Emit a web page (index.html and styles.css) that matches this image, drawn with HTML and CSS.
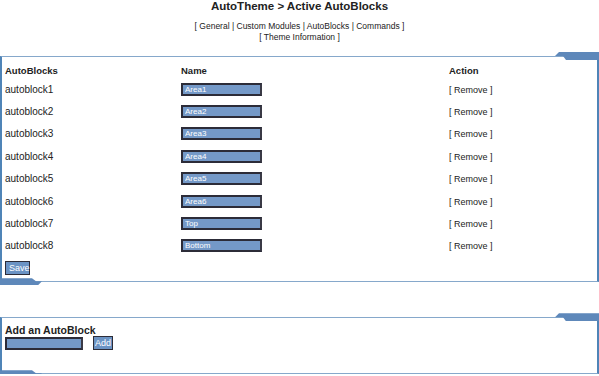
FILE: index.html
```html
<!DOCTYPE html>
<html lang="en">
<head>
  <meta charset="UTF-8">
  <title>AutoTheme - Active AutoBlocks</title>
  <link rel="stylesheet" href="styles.css">
</head>
<body>
  <h1 class="title">AutoTheme &gt; Active AutoBlocks</h1>
  <div class="menu">
    [ <a href="#">General</a> | <a href="#">Custom Modules</a> | <a href="#">AutoBlocks</a> | <a href="#">Commands</a> ]<br>
    [ <a href="#">Theme Information</a> ]
  </div>

  <form class="panel panel-list">
    <div class="grid head">
      <span>AutoBlocks</span>
      <span>Name</span>
      <span>Action</span>
    </div>
    <div class="grid row">
      <span>autoblock1</span>
      <span><input class="field" type="text" value="Area1"></span>
      <span><a class="remove" href="#">[ Remove ]</a></span>
    </div>
    <div class="grid row">
      <span>autoblock2</span>
      <span><input class="field" type="text" value="Area2"></span>
      <span><a class="remove" href="#">[ Remove ]</a></span>
    </div>
    <div class="grid row">
      <span>autoblock3</span>
      <span><input class="field" type="text" value="Area3"></span>
      <span><a class="remove" href="#">[ Remove ]</a></span>
    </div>
    <div class="grid row">
      <span>autoblock4</span>
      <span><input class="field" type="text" value="Area4"></span>
      <span><a class="remove" href="#">[ Remove ]</a></span>
    </div>
    <div class="grid row">
      <span>autoblock5</span>
      <span><input class="field" type="text" value="Area5"></span>
      <span><a class="remove" href="#">[ Remove ]</a></span>
    </div>
    <div class="grid row">
      <span>autoblock6</span>
      <span><input class="field" type="text" value="Area6"></span>
      <span><a class="remove" href="#">[ Remove ]</a></span>
    </div>
    <div class="grid row">
      <span>autoblock7</span>
      <span><input class="field" type="text" value="Top"></span>
      <span><a class="remove" href="#">[ Remove ]</a></span>
    </div>
    <div class="grid row">
      <span>autoblock8</span>
      <span><input class="field" type="text" value="Bottom"></span>
      <span><a class="remove" href="#">[ Remove ]</a></span>
    </div>
    <button class="btn save" type="submit">Save</button>
  </form>

  <form class="panel panel-add">
    <div class="add-label">Add an AutoBlock</div>
    <div class="add-row">
      <input class="field field-new" type="text">
      <button class="btn" type="submit">Add</button>
    </div>
  </form>
</body>
</html>
```

FILE: styles.css
```css
body {
  margin: 0;
  font-family: "Liberation Sans", Arial, sans-serif;
  font-size: 10px;
  color: #222;
  background: #fff;
}
a {
  color: #222;
  text-decoration: none;
}
.title {
  margin: 0;
  text-align: center;
  font-size: 11.5px;
  font-weight: bold;
  color: #222;
  line-height: 12px;
}
.menu {
  margin-top: 9px;
  text-align: center;
  font-size: 8.5px;
  line-height: 11px;
}
.panel {
  position: relative;
  border-left: 2px solid #4f84b7;
  border-right: 2px solid #4f84b7;
  border-top: 1px solid #86a8cb;
  border-bottom: 1px solid #86a8cb;
}
/* tab in the top right corner */
.panel::before {
  content: "";
  position: absolute;
  top: -5px;
  right: -2px;
  width: 44px;
  height: 8px;
  background: #5e88ba;
  clip-path: polygon(4px 0, 100% 0, 100% 100%, 11px 100%, 8px 4px, 0 4px);
}
/* tab in the bottom left corner */
.panel::after {
  content: "";
  position: absolute;
  bottom: -4px;
  left: -2px;
  width: 42px;
  height: 7px;
  background: #5e88ba;
  clip-path: polygon(0 0, 32px 0, 36px 3px, 42px 3px, 38px 100%, 0 100%);
}
.panel-list {
  margin-top: 13px;
  padding: 6px 0 6px 3px;
}
.grid {
  display: grid;
  grid-template-columns: 176px 268px 1fr;
  align-items: center;
}
.head {
  font-size: 9.5px;
  font-weight: bold;
  height: 15px;
}
.row {
  height: 22.4px;
}
.remove {
  font-size: 9px;
}
.field {
  box-sizing: border-box;
  width: 81px;
  height: 13px;
  margin: 0;
  padding: 0 2px;
  border: 2px solid #2c2c38;
  border-right-color: #3a3a46;
  background: #7499c8;
  color: #fff;
  font-family: "Liberation Sans", Arial, sans-serif;
  font-size: 8px;
}
.btn {
  box-sizing: border-box;
  height: 14px;
  padding: 0 3px;
  border: 1px solid #2c2c38;
  background: #6b93c4;
  color: #fff;
  font-family: "Liberation Sans", Arial, sans-serif;
  font-size: 9px;
  cursor: pointer;
}
.save {
  margin-top: 4px;
  width: 25px;
}
.panel-add {
  margin-top: 35px;
  height: 49px;
  padding: 6px 3px 0;
}
.add-label {
  font-size: 10.5px;
  font-weight: bold;
  line-height: 12px;
}
.add-row {
  display: flex;
  align-items: center;
  gap: 10px;
}
.field-new {
  width: 78px;
  height: 13px;
}
.add-row .btn {
  width: 20px;
  padding: 0;
}
```
